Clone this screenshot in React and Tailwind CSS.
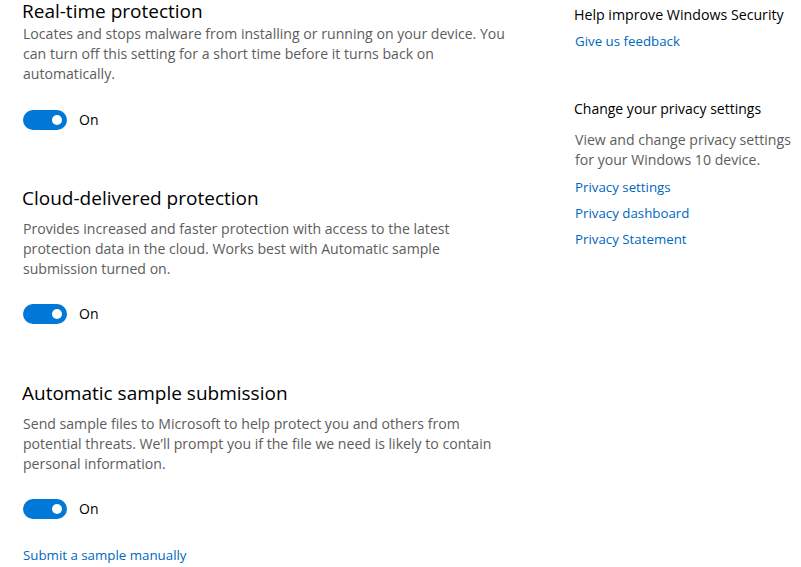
import React from "react";

const Toggle = () => (
  <div className="flex items-center h-[20px]">
    <div className="w-[44px] h-[20px] rounded-full bg-[#0078d7] flex items-center justify-end pr-[5px]">
      <div className="w-[10px] h-[10px] rounded-full bg-white" />
    </div>
    <span className="ml-[12px] text-[14px] leading-[20px] text-black">On</span>
  </div>
);

const Lines = ({ lines }) => (
  <div className="text-[14.1px] leading-[20px] text-[#5d5d5d]">
    {lines.map((l, i) => (
      <div key={i} className="whitespace-nowrap">{l}</div>
    ))}
  </div>
);

export default function App() {
  return (
    <div
      className="w-[801px] h-[567px] bg-white overflow-hidden flex"
      style={{ fontFamily: '"Segoe UI", "Open Sans", sans-serif' }}
    >
      <div className="w-[551px] pl-[23px] flex flex-col">
        <h2 className="mt-[1px] text-[19px] leading-[20px] text-black ml-[-1px]">Real-time protection</h2>
        <div className="mt-[3px]">
          <Lines
            lines={[
              "Locates and stops malware from installing or running on your device. You",
              "can turn off this setting for a short time before it turns back on",
              "automatically.",
            ]}
          />
        </div>
        <div className="mt-[26px]">
          <Toggle />
        </div>

        <h2 className="mt-[56px] text-[19px] leading-[24px] text-black ml-[-1px]">Cloud-delivered protection</h2>
        <div className="mt-[9px]">
          <Lines
            lines={[
              "Provides increased and faster protection with access to the latest",
              "protection data in the cloud. Works best with Automatic sample",
              "submission turned on.",
            ]}
          />
        </div>
        <div className="mt-[25px]">
          <Toggle />
        </div>

        <h2 className="mt-[57px] text-[19px] leading-[24px] text-black ml-[-1px]">Automatic sample submission</h2>
        <div className="mt-[9px]">
          <Lines
            lines={[
              "Send sample files to Microsoft to help protect you and others from",
              "potential threats. We\u2019ll prompt you if the file we need is likely to contain",
              "personal information.",
            ]}
          />
        </div>
        <div className="mt-[25px]">
          <Toggle />
        </div>
        <a className="mt-[26px] text-[13.3px] leading-[20px] text-[#0067c0] cursor-pointer">Submit a sample manually</a>
      </div>

      <div className="flex-1 pl-[23px] flex flex-col text-[14px] leading-[20px]">
        <div className="mt-[5px] text-black text-[14.2px]">Help improve Windows Security</div>
        <a className="mt-[6px] text-[#0067c0] ml-[1px] text-[13.3px]">Give us feedback</a>
        <div className="mt-[48px] text-black">Change your privacy settings</div>
        <div className="mt-[11px] text-[#5d5d5d] ml-[1px] text-[14.1px]">
          <div className="whitespace-nowrap">View and change privacy settings</div>
          <div className="whitespace-nowrap">for your Windows 10 device.</div>
        </div>
        <div className="mt-[7px] flex flex-col gap-[6px] ml-[1px] text-[#0067c0] text-[13.3px]">
          <a>Privacy settings</a>
          <a>Privacy dashboard</a>
          <a>Privacy Statement</a>
        </div>
      </div>
    </div>
  );
}
